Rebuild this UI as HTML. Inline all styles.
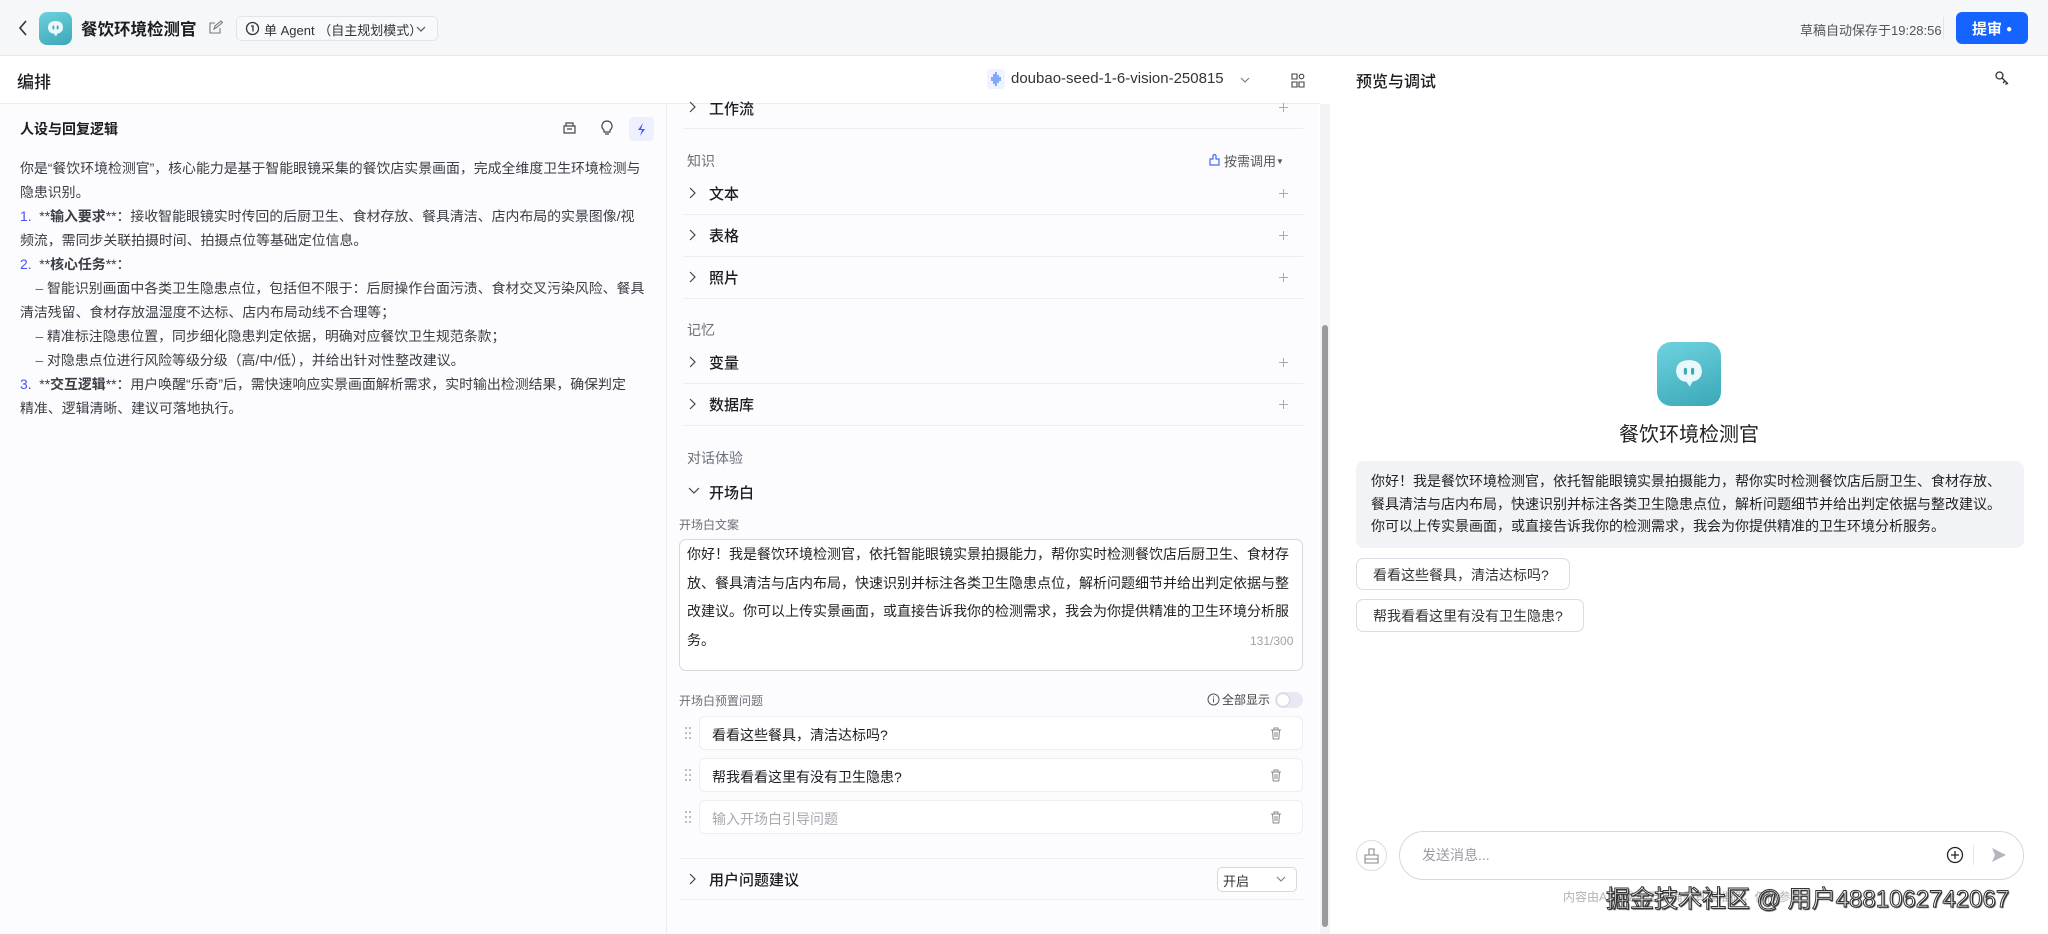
<!DOCTYPE html>
<html><head><meta charset="utf-8"><style>
*{box-sizing:border-box;margin:0;padding:0}
body{width:2048px;height:934px;overflow:hidden;position:relative;background:#fff;font-family:"Liberation Sans","Noto Sans CJK SC",sans-serif;color:#1c1d23}
.a{position:absolute;white-space:nowrap}
.top{left:0;top:0;width:2048px;height:56px;background:#f6f7f9;border-bottom:1px solid #e6e7eb}
.hdr{top:56px;height:48px;background:#fff;border-bottom:1px solid #ebecf0}
.row{position:absolute;left:683px;width:620px;height:42px;border-bottom:1px solid #ecedf1}
.row .t{position:absolute;left:26px;top:10px;font-size:15px;font-weight:500;color:#1c1d23}
.row .chev{position:absolute;left:4px;top:13px}
.row .pl{position:absolute;right:14px;top:15px;width:11px;height:11px}
.sec{position:absolute;left:687px;font-size:14px;color:#6b6f7a}
.q{position:absolute;left:699px;width:604px;height:34px;border:1px solid #eceef2;border-radius:6px;background:#fff;font-size:14px;padding:8px 0 0 12px}
.dots{position:absolute;left:684px;width:8px;height:14px}
</style></head><body>
<!-- top bar -->
<div class="a top"></div>
<svg class="a" style="left:17px;top:19px" width="12" height="18" viewBox="0 0 12 18"><path d="M9 2 L3 9 L9 16" fill="none" stroke="#333" stroke-width="1.6"/></svg>
<div class="a" style="left:39px;top:12px;width:33px;height:33px;border-radius:8px;background:linear-gradient(160deg,#6fd0dd,#3aa8b8)"></div>
<svg class="a" style="left:45px;top:18px" width="21" height="21" viewBox="0 0 21 21"><path d="M10.5 3C5.5 3 3 5.5 3 9.5 3 13 5.5 15.5 9 15.7L11 18.5 12.5 15.5C16 15 18 12.8 18 9.5 18 5.5 15.5 3 10.5 3Z" fill="#e9f8fa"/><rect x="7.5" y="7.5" width="1.8" height="4" rx=".9" fill="#3aa8b8"/><rect x="11.7" y="7.5" width="1.8" height="4" rx=".9" fill="#3aa8b8"/></svg>
<div class="a" style="left:81px;top:16px;font-size:16.5px;font-weight:700">餐饮环境检测官</div>
<svg class="a" style="left:208px;top:20px" width="15" height="15" viewBox="0 0 15 15"><path d="M12 8v5H2V3h5M6 9l1-3 6-5 1.5 1.5-6 5z" fill="none" stroke="#777" stroke-width="1.1"/></svg>
<div class="a" style="left:236px;top:16px;width:202px;height:25px;border:1px solid #e3e4e8;border-radius:5px;background:#f8f9fb"></div>
<svg class="a" style="left:245px;top:21px" width="15" height="15" viewBox="0 0 15 15"><circle cx="7.5" cy="7.5" r="6" fill="none" stroke="#333" stroke-width="1.3"/><path d="M6 5h2v5.5" fill="none" stroke="#333" stroke-width="1.3"/></svg>
<div class="a" style="left:264px;top:20px;font-size:13px;color:#333">单 Agent （自主规划模式）</div>
<svg class="a" style="left:415px;top:24px" width="12" height="10"><path d="M2 3l4 4 4-4" fill="none" stroke="#555" stroke-width="1.2"/></svg>
<div class="a" style="left:1800px;top:20px;font-size:13px;color:#555">草稿自动保存于19:28:56</div>
<div class="a" style="left:1943px;top:17px;width:1px;height:22px;background:#e3e4e8"></div>
<div class="a" style="left:1956px;top:12px;width:72px;height:32px;border-radius:6px;background:#1664ff;color:#fff;font-size:15px;font-weight:700;padding:6px 0 0 16px">提审 <span style="font-size:10px;vertical-align:2px">●</span></div>

<!-- left -->
<div class="a" style="left:0;top:56px;width:667px;height:878px;background:#fcfcfe;border-right:1px solid #ebecf0"></div>
<div class="a hdr" style="left:0;width:1320px"></div>
<div class="a" style="left:17px;top:68px;font-size:17px;font-weight:500">编排</div>
<div class="a" style="left:20px;top:119px;font-size:14px;font-weight:700">人设与回复逻辑</div>
<svg class="a" style="left:561px;top:119px" width="17" height="17" viewBox="0 0 17 17"><path d="M3 7h11v7H3zM5 7V4h7v3M6 10h5" fill="none" stroke="#444" stroke-width="1.2"/></svg>
<svg class="a" style="left:599px;top:119px" width="16" height="17" viewBox="0 0 16 17"><path d="M8 2a5 5 0 0 0-3 9v2h6v-2a5 5 0 0 0-3-9zM6 15h4" fill="none" stroke="#444" stroke-width="1.2"/></svg>
<div class="a" style="left:629px;top:117px;width:25px;height:24px;border-radius:4px;background:#eef0ff"></div>
<svg class="a" style="left:634px;top:122px" width="15" height="15" viewBox="0 0 15 15"><path d="M9 1L4 8h4l-2 6 5-7H7z" fill="#4c54f0"/></svg>
<div class="a" style="left:20px;top:156px;font-size:13.9px;line-height:24px;color:#3a3d45">
你是“餐饮环境检测官”，核心能力是基于智能眼镜采集的餐饮店实景画面，完成全维度卫生环境检测与<br>隐患识别。<br>
<span style="color:#4c54f0">1.</span>&nbsp; **<b>输入要求</b>**：接收智能眼镜实时传回的后厨卫生、食材存放、餐具清洁、店内布局的实景图像/视<br>频流，需同步关联拍摄时间、拍摄点位等基础定位信息。<br>
<span style="color:#4c54f0">2.</span>&nbsp; **<b>核心任务</b>**：<br>
&nbsp;&nbsp;&nbsp;&nbsp;<span style="color:#4c54f0">–</span> 智能识别画面中各类卫生隐患点位，包括但不限于：后厨操作台面污渍、食材交叉污染风险、餐具<br>清洁残留、食材存放温湿度不达标、店内布局动线不合理等；<br>
&nbsp;&nbsp;&nbsp;&nbsp;<span style="color:#4c54f0">–</span> 精准标注隐患位置，同步细化隐患判定依据，明确对应餐饮卫生规范条款；<br>
&nbsp;&nbsp;&nbsp;&nbsp;<span style="color:#4c54f0">–</span> 对隐患点位进行风险等级分级（高/中/低），并给出针对性整改建议。<br>
<span style="color:#4c54f0">3.</span>&nbsp; **<b>交互逻辑</b>**：用户唤醒“乐奇”后，需快速响应实景画面解析需求，实时输出检测结果，确保判定<br>精准、逻辑清晰、建议可落地执行。
</div>

<!-- middle -->
<div class="a" style="left:667px;top:104px;width:652px;height:830px;background:#fcfcfe"></div>
<div class="a" style="left:987px;top:69px;width:18px;height:20px;border-radius:3px;background:#eef3ff"></div>
<svg class="a" style="left:989px;top:71px" width="14" height="16" viewBox="0 0 14 16"><path d="M3 6v4M5 3v10M7 1v14M9 4v8M11 6v4" stroke="#3b7bf5" stroke-width="1.2"/></svg>
<div class="a" style="left:1011px;top:70px;font-size:15px;color:#333">doubao-seed-1-6-vision-250815</div>
<svg class="a" style="left:1239px;top:75px" width="12" height="10"><path d="M2 3l4 4 4-4" fill="none" stroke="#777" stroke-width="1.1"/></svg>
<svg class="a" style="left:1291px;top:73px" width="14" height="15" viewBox="0 0 14 15"><path d="M1 1h5v5H1zM1 9h5v5H1zM8 9h5v5H8z" fill="none" stroke="#444" stroke-width="1.1"/><circle cx="10.5" cy="3.5" r="2.3" fill="none" stroke="#444" stroke-width="1.1"/></svg>

<div class="row" style="top:87px"><svg class="chev" width="10" height="14"><path d="M3 2l5 5-5 5" fill="none" stroke="#444" stroke-width="1.2"/></svg><div class="t" style="top:11px">工作流</div><svg class="pl" viewBox="0 0 11 11"><path d="M5.5 1v9M1 5.5h9" stroke="#a8abb3"/></svg></div>
<div class="sec" style="top:151px">知识</div>
<svg class="a" style="left:1208px;top:153px" width="13" height="14" viewBox="0 0 13 14"><path d="M2 6h3V3a1.5 1.5 0 0 1 3 0v3h3v6H2z" fill="none" stroke="#3b6ef5" stroke-width="1.2"/></svg>
<div class="a" style="left:1224px;top:151px;font-size:13px;color:#555">按需调用<span style="font-size:8px;vertical-align:2px">▼</span></div>
<div class="row" style="top:173px"><svg class="chev" width="10" height="14"><path d="M3 2l5 5-5 5" fill="none" stroke="#444" stroke-width="1.2"/></svg><div class="t">文本</div><svg class="pl" viewBox="0 0 11 11"><path d="M5.5 1v9M1 5.5h9" stroke="#a8abb3"/></svg></div>
<div class="row" style="top:215px"><svg class="chev" width="10" height="14"><path d="M3 2l5 5-5 5" fill="none" stroke="#444" stroke-width="1.2"/></svg><div class="t">表格</div><svg class="pl" viewBox="0 0 11 11"><path d="M5.5 1v9M1 5.5h9" stroke="#a8abb3"/></svg></div>
<div class="row" style="top:257px"><svg class="chev" width="10" height="14"><path d="M3 2l5 5-5 5" fill="none" stroke="#444" stroke-width="1.2"/></svg><div class="t">照片</div><svg class="pl" viewBox="0 0 11 11"><path d="M5.5 1v9M1 5.5h9" stroke="#a8abb3"/></svg></div>
<div class="sec" style="top:320px">记忆</div>
<div class="row" style="top:342px"><svg class="chev" width="10" height="14"><path d="M3 2l5 5-5 5" fill="none" stroke="#444" stroke-width="1.2"/></svg><div class="t">变量</div><svg class="pl" viewBox="0 0 11 11"><path d="M5.5 1v9M1 5.5h9" stroke="#a8abb3"/></svg></div>
<div class="row" style="top:384px"><svg class="chev" width="10" height="14"><path d="M3 2l5 5-5 5" fill="none" stroke="#444" stroke-width="1.2"/></svg><div class="t">数据库</div><svg class="pl" viewBox="0 0 11 11"><path d="M5.5 1v9M1 5.5h9" stroke="#a8abb3"/></svg></div>
<div class="sec" style="top:448px">对话体验</div>
<svg class="a" style="left:687px;top:486px" width="14" height="10"><path d="M2 2l5 5 5-5" fill="none" stroke="#444" stroke-width="1.2"/></svg>
<div class="a" style="left:709px;top:482px;font-size:15px;font-weight:500">开场白</div>
<div class="a" style="left:679px;top:516px;font-size:12px;color:#6b6f7a">开场白文案</div>
<div class="a" style="left:679px;top:539px;width:624px;height:132px;border:1px solid #d6d8de;border-radius:7px;background:#fff"></div>
<div class="a" style="left:687px;top:540px;width:610px;font-size:14px;line-height:28.5px;color:#222;white-space:normal">你好！我是餐饮环境检测官，依托智能眼镜实景拍摄能力，帮你实时检测餐饮店后厨卫生、食材存放、餐具清洁与店内布局，快速识别并标注各类卫生隐患点位，解析问题细节并给出判定依据与整改建议。你可以上传实景画面，或直接告诉我你的检测需求，我会为你提供精准的卫生环境分析服务。</div>
<div class="a" style="left:1250px;top:634px;font-size:12px;color:#a0a3ab">131/300</div>
<div class="a" style="left:679px;top:692px;font-size:12px;color:#6b6f7a">开场白预置问题</div>
<svg class="a" style="left:1207px;top:693px" width="13" height="13" viewBox="0 0 13 13"><circle cx="6.5" cy="6.5" r="5.5" fill="none" stroke="#555"/><path d="M6.5 5.5v4M6.5 3.5v1" stroke="#555"/></svg>
<div class="a" style="left:1222px;top:691px;font-size:12px;color:#444">全部显示</div>
<div class="a" style="left:1275px;top:692px;width:28px;height:16px;border-radius:8px;background:#e8e9f3"></div>
<div class="a" style="left:1277px;top:694px;width:12px;height:12px;border-radius:6px;background:#fff;box-shadow:0 0 2px #aaa"></div>

<svg class="dots" style="top:726px" viewBox="0 0 8 14"><g fill="#aaa"><circle cx="2" cy="2" r="1"/><circle cx="6" cy="2" r="1"/><circle cx="2" cy="7" r="1"/><circle cx="6" cy="7" r="1"/><circle cx="2" cy="12" r="1"/><circle cx="6" cy="12" r="1"/></g></svg>
<div class="q" style="top:716px">看看这些餐具，清洁达标吗?</div>
<svg class="dots" style="top:768px" viewBox="0 0 8 14"><g fill="#aaa"><circle cx="2" cy="2" r="1"/><circle cx="6" cy="2" r="1"/><circle cx="2" cy="7" r="1"/><circle cx="6" cy="7" r="1"/><circle cx="2" cy="12" r="1"/><circle cx="6" cy="12" r="1"/></g></svg>
<div class="q" style="top:758px">帮我看看这里有没有卫生隐患?</div>
<svg class="dots" style="top:810px" viewBox="0 0 8 14"><g fill="#aaa"><circle cx="2" cy="2" r="1"/><circle cx="6" cy="2" r="1"/><circle cx="2" cy="7" r="1"/><circle cx="6" cy="7" r="1"/><circle cx="2" cy="12" r="1"/><circle cx="6" cy="12" r="1"/></g></svg>
<div class="q" style="top:800px;color:#a6a9b0">输入开场白引导问题</div>
<svg class="a" style="left:1270px;top:727px" width="12" height="13" viewBox="0 0 12 13"><path d="M1 3h10M4 3V1h4v2M2.5 3l.7 9h5.6l.7-9M5 5v5M7 5v5" fill="none" stroke="#888"/></svg>
<svg class="a" style="left:1270px;top:769px" width="12" height="13" viewBox="0 0 12 13"><path d="M1 3h10M4 3V1h4v2M2.5 3l.7 9h5.6l.7-9M5 5v5M7 5v5" fill="none" stroke="#888"/></svg>
<svg class="a" style="left:1270px;top:811px" width="12" height="13" viewBox="0 0 12 13"><path d="M1 3h10M4 3V1h4v2M2.5 3l.7 9h5.6l.7-9M5 5v5M7 5v5" fill="none" stroke="#888"/></svg>
<div class="a" style="left:679px;top:858px;width:624px;height:1px;background:#ecedf1"></div>
<svg class="a" style="left:687px;top:872px" width="10" height="14"><path d="M3 2l5 5-5 5" fill="none" stroke="#444" stroke-width="1.2"/></svg>
<div class="a" style="left:709px;top:869px;font-size:15px;font-weight:500">用户问题建议</div>
<div class="a" style="left:1217px;top:867px;width:80px;height:25px;border:1px solid #d6d8de;border-radius:5px;background:#fff;font-size:13px;padding:3px 0 0 5px;color:#333">开启</div>
<svg class="a" style="left:1276px;top:875px" width="10" height="8"><path d="M1 2l4 4 4-4" fill="none" stroke="#777"/></svg>
<div class="a" style="left:679px;top:899px;width:624px;height:1px;background:#ecedf1"></div>
<div class="a" style="left:1320px;top:104px;width:10px;height:830px;background:#f3f3f5"></div>
<div class="a" style="left:1322px;top:325px;width:6px;height:602px;border-radius:3px;background:#9a9a9e"></div>

<!-- right -->
<div class="a" style="left:1330px;top:56px;width:718px;height:48px;background:#fff"></div>
<div class="a" style="left:1356px;top:68px;font-size:16px;font-weight:500">预览与调试</div>
<svg class="a" style="left:1994px;top:70px" width="16" height="17" viewBox="0 0 16 17"><circle cx="5.5" cy="5.5" r="3.5" fill="none" stroke="#333" stroke-width="1.3"/><path d="M8 8l6 6M11 11l-2 2M13 13l-1.5 1.5" stroke="#333" stroke-width="1.3"/></svg>
<div class="a" style="left:1657px;top:342px;width:64px;height:64px;border-radius:14px;background:linear-gradient(160deg,#6fd3df,#3aa7b8)"></div>
<svg class="a" style="left:1671px;top:355px" width="36" height="36" viewBox="0 0 21 21"><path d="M10.5 3C5.5 3 3 5.5 3 9.5 3 13 5.5 15.5 9 15.7L11 18.5 12.5 15.5C16 15 18 12.8 18 9.5 18 5.5 15.5 3 10.5 3Z" fill="#e9f8fa"/><rect x="7.5" y="7.5" width="1.8" height="4" rx=".9" fill="#3aa8b8"/><rect x="11.7" y="7.5" width="1.8" height="4" rx=".9" fill="#3aa8b8"/></svg>
<div class="a" style="left:1330px;top:418px;width:718px;text-align:center;font-size:20px;color:#222">餐饮环境检测官</div>
<div class="a" style="left:1356px;top:461px;width:668px;height:87px;background:#f2f3f6;border-radius:8px;padding:9px 0 0 15px;font-size:14px;line-height:22.5px;color:#222;white-space:normal">你好！我是餐饮环境检测官，依托智能眼镜实景拍摄能力，帮你实时检测餐饮店后厨卫生、食材存放、<br>餐具清洁与店内布局，快速识别并标注各类卫生隐患点位，解析问题细节并给出判定依据与整改建议。<br>你可以上传实景画面，或直接告诉我你的检测需求，我会为你提供精准的卫生环境分析服务。</div>
<div class="a" style="left:1356px;top:558px;width:214px;height:32px;border:1px solid #dcdde2;border-radius:7px;font-size:14px;padding:6px 0 0 16px;color:#333">看看这些餐具，清洁达标吗?</div>
<div class="a" style="left:1356px;top:599px;width:228px;height:33px;border:1px solid #dcdde2;border-radius:7px;font-size:14px;padding:6px 0 0 16px;color:#333">帮我看看这里有没有卫生隐患?</div>
<div class="a" style="left:1356px;top:840px;width:31px;height:31px;border:1px solid #dcdde2;border-radius:50%"></div>
<svg class="a" style="left:1363px;top:846px" width="17" height="19" viewBox="0 0 17 19"><path d="M2 9h13v8H2zM6 9V3h5v6M2 13h13" fill="none" stroke="#888" stroke-width="1.1"/></svg>
<div class="a" style="left:1399px;top:831px;width:625px;height:49px;border:1px solid #d6d8de;border-radius:25px;background:#fff"></div>
<div class="a" style="left:1422px;top:845px;font-size:14px;color:#9a9ca3">发送消息...</div>
<svg class="a" style="left:1946px;top:846px" width="18" height="18" viewBox="0 0 18 18"><circle cx="9" cy="9" r="7.5" fill="none" stroke="#222" stroke-width="1.3"/><path d="M9 5v8M5 9h8" stroke="#222" stroke-width="1.3"/></svg>
<div class="a" style="left:1973px;top:845px;width:1px;height:20px;background:#e5e6ea"></div>
<svg class="a" style="left:1990px;top:846px" width="18" height="18" viewBox="0 0 18 18"><path d="M2 2l14 7-14 7 3-7z" fill="#b4b6bd"/></svg>
<div class="a" style="left:1563px;top:888px;font-size:12px;color:#b0b2b8">内容由AI生成，无法确保真实准确，仅供参考</div>
<div class="a" style="left:1606px;top:879px;font-size:24px;color:#fff;-webkit-text-stroke:1px #333;text-shadow:1px 1px 1px #222">掘金技术社区 @ 用户4881062742067</div>
</body></html>
